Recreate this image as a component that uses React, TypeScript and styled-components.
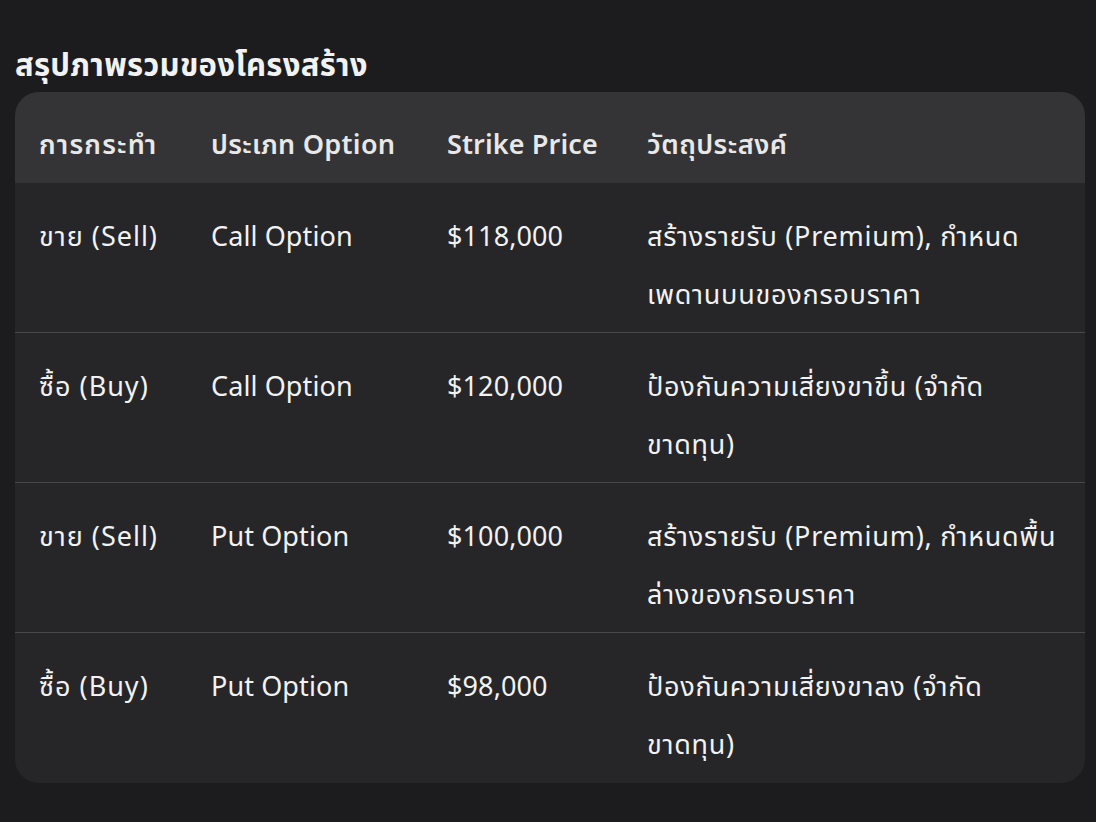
import styled, { createGlobalStyle } from "styled-components";

const GlobalStyle = createGlobalStyle`
  html, body {
    margin: 0;
    padding: 0;
    background: #1c1c1e;
  }
  body {
    font-family: "Noto Sans Thai", "Noto Sans", "Liberation Sans", sans-serif;
    color: #f2f2f2;
  }
`;

const rows = [
  {
    action: "ขาย (Sell)",
    type: "Call Option",
    strike: "$118,000",
    goal: ["สร้างรายรับ (Premium), กำหนด", "เพดานบนของกรอบราคา"],
  },
  {
    action: "ซื้อ (Buy)",
    type: "Call Option",
    strike: "$120,000",
    goal: ["ป้องกันความเสี่ยงขาขึ้น (จำกัด", "ขาดทุน)"],
  },
  {
    action: "ขาย (Sell)",
    type: "Put Option",
    strike: "$100,000",
    goal: ["สร้างรายรับ (Premium), กำหนดพื้น", "ล่างของกรอบราคา"],
  },
  {
    action: "ซื้อ (Buy)",
    type: "Put Option",
    strike: "$98,000",
    goal: ["ป้องกันความเสี่ยงขาลง (จำกัด", "ขาดทุน)"],
  },
];

export default function App() {
  return (
    <Page>
      <GlobalStyle />
      <Title>สรุปภาพรวมของโครงสร้าง</Title>
      <Table>
        <HeadRow>
          <HeadCell $spacing={1.2}>การกระทำ</HeadCell>
          <HeadCell $spacing={0.3}>ประเภท Option</HeadCell>
          <HeadCell $spacing={0.1}>Strike Price</HeadCell>
          <HeadCell $spacing={0.5}>วัตถุประสงค์</HeadCell>
        </HeadRow>
        {rows.map((r, i) => (
          <BodyRow key={i} $last={i === rows.length - 1}>
            <Cell $spacing={1}>{r.action}</Cell>
            <Cell $spacing={0.1}>{r.type}</Cell>
            <Cell $spacing={0.1}>{r.strike}</Cell>
            <Cell $spacing={0.75}>
              {r.goal.map((line, j) => (
                <Line key={j}>{line}</Line>
              ))}
            </Cell>
          </BodyRow>
        ))}
      </Table>
    </Page>
  );
}

const Page = styled.div`
  width: 1096px;
  height: 822px;
  padding: 46px 11px 0 15px;
  box-sizing: border-box;
`;

const Title = styled.h2`
  margin: 0 0 4px 0;
  font-size: 31px;
  font-weight: 700;
  line-height: 42px;
  color: #f2f2f2;
  letter-spacing: 0.3px;
`;

const Table = styled.div`
  width: 1070px;
  background: #262628;
  border-radius: 24px;
  overflow: hidden;
`;

const Grid = styled.div`
  display: grid;
  grid-template-columns: 172px 236px 200px 462px;
`;

const HeadRow = styled(Grid)`
  background: #343436;
  height: 91px;
  box-sizing: border-box;
  padding-top: 16px;
  align-items: center;
`;

const BodyRow = styled(Grid)<{ $last?: boolean }>`
  height: 150px;
  box-sizing: border-box;
  border-bottom: ${(p) => (p.$last ? "none" : "1px solid #48484a")};
  align-items: start;
`;

const HeadCell = styled.div<{ $spacing: number }>`
  padding: 0 24px;
  font-size: 27px;
  font-weight: 600;
  color: #e8e8e8;
  white-space: nowrap;
  letter-spacing: ${(p) => p.$spacing}px;
`;

const Cell = styled.div<{ $spacing: number }>`
  padding: 26px 24px 0 24px;
  font-size: 27px;
  line-height: 58px;
  color: #f2f2f2;
  white-space: nowrap;
  letter-spacing: ${(p) => p.$spacing}px;
`;

const Line = styled.div`
  display: block;
`;
